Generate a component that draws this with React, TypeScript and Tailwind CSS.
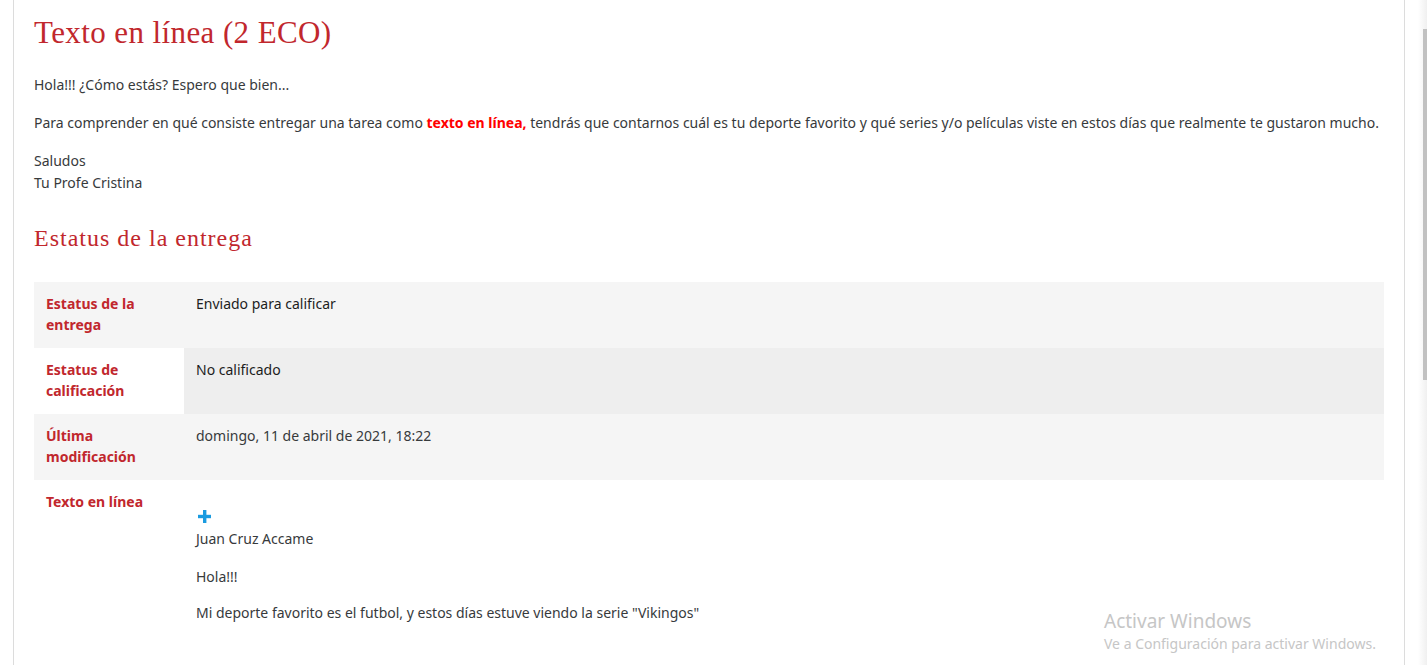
import React from "react";

const rows = [
  { label: "Estatus de la entrega", value: "Enviado para calificar", bg: "bg-[#f5f5f5]", valueBg: "", dark: true },
  { label: "Estatus de calificación", value: "No calificado", bg: "bg-white", valueBg: "bg-[#eeeeee]", dark: true },
  { label: "Última modificación", value: "domingo, 11 de abril de 2021, 18:22", bg: "bg-[#f5f5f5]", valueBg: "", dark: false },
];

export default function App() {
  return (
    <div className="relative w-[1427px] h-[665px] overflow-hidden bg-white" style={{ fontFamily: '"Segoe UI", "Noto Sans", sans-serif' }}>
      <div className="flex h-full">
        <div className="w-[13px] shrink-0" />
        <div className="w-[393px] grow border-l border-r border-[#dcdcdc] pl-[20px] pr-[20px] text-[14px] text-[#373a3c]">
          <h1 className="mt-[14px] text-[31px] leading-[38px] tracking-[0.4px] text-[#c1272d]" style={{ fontFamily: '"Liberation Serif", serif' }}>
            Texto en línea (2 ECO)
          </h1>
          <p className="mt-[22px] leading-[22px]">Hola!!! ¿Cómo estás? Espero que bien...</p>
          <p className="mt-[16px] leading-[22px]">
            Para comprender en qué consiste entregar una tarea como{" "}
            <b className="text-[#ff0000]">texto en línea,</b> tendrás que contarnos cuál es tu deporte favorito y qué series y/o películas viste en estos días que realmente te gustaron mucho.
          </p>
          <p className="mt-[16px] leading-[22px]">
            Saludos
            <br />
            Tu Profe Cristina
          </p>
          <h2 className="mt-[29px] text-[24px] leading-[30px] tracking-[1px] text-[#c1272d]" style={{ fontFamily: '"Liberation Serif", serif' }}>
            Estatus de la entrega
          </h2>
          <div className="mt-[29px]">
            {rows.map((r) => (
              <div key={r.label} className={`flex h-[66px] ${r.bg}`}>
                <div className="w-[150px] shrink-0 px-[12px] pt-[11px] font-bold leading-[21px] text-[#c1272d]">{r.label}</div>
                <div className={`grow px-[12px] pt-[11px] leading-[21px] ${r.valueBg} ${r.dark ? "text-[#1d1d1d]" : ""}`}>{r.value}</div>
              </div>
            ))}
            <div className="flex">
              <div className="w-[150px] shrink-0 px-[12px] pt-[11px] font-bold leading-[21px] text-[#c1272d]">Texto en línea</div>
              <div className="grow px-[12px] pt-[30px]">
                <svg width="13" height="13" viewBox="0 0 13 13" className="ml-[2px]">
                  <rect x="5" y="0" width="3.4" height="13" fill="#1a9be0" />
                  <rect x="0" y="4.8" width="13" height="3.4" fill="#1a9be0" />
                </svg>
                <p className="mt-[5px] leading-[22px]">Juan Cruz Accame</p>
                <p className="mt-[16px] leading-[22px]">Hola!!!</p>
                <p className="mt-[14px] leading-[22px]">Mi deporte favorito es el futbol, y estos días estuve viendo la serie "Vikingos"</p>
              </div>
            </div>
          </div>
        </div>
        <div className="w-[22px] shrink-0 relative">
          <div className="absolute left-[13px] top-0 h-full w-[9px] bg-gradient-to-r from-white to-[#f0f0f0]" />
          <div className="absolute left-[18px] top-[29px] h-[351px] w-[4px] bg-[#c1c1c1]" />
        </div>
      </div>
      <div className="absolute left-[1104px] top-[609px] text-[#c6c6c6]">
        <div className="text-[19px] leading-[25px]">Activar Windows</div>
        <div className="text-[14px] leading-[20px]">Ve a Configuración para activar Windows.</div>
      </div>
    </div>
  );
}
